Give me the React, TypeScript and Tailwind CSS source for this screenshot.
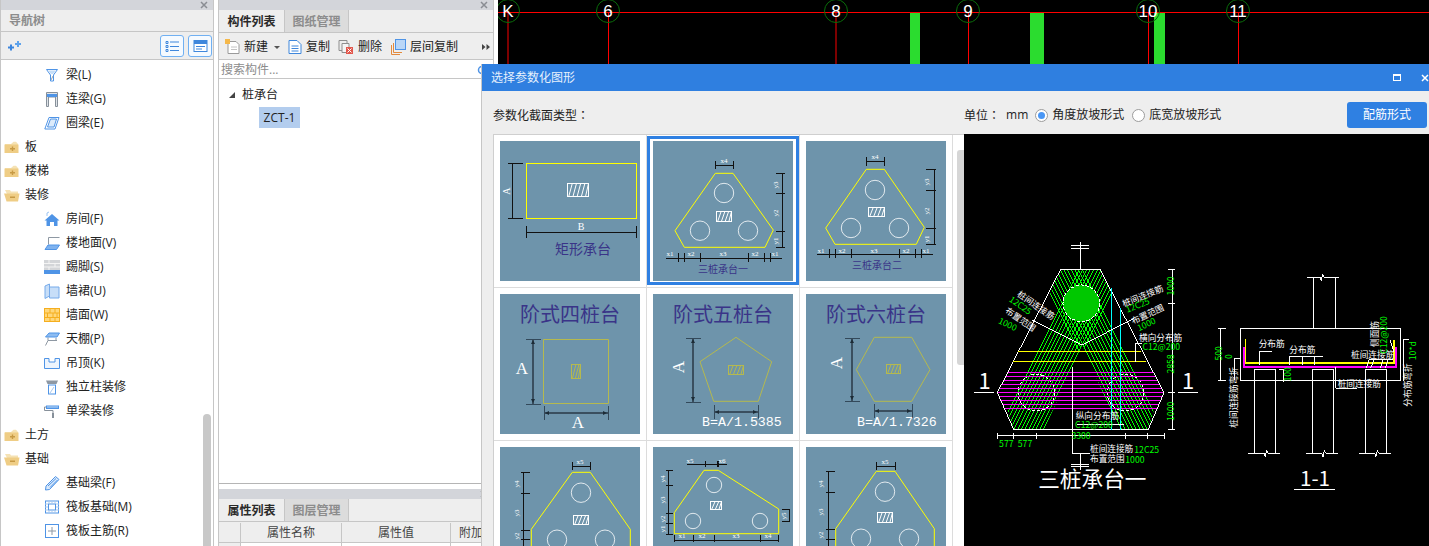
import type { ReactNode } from "react";

const INK = "#111";
const TITLE = "#3a3488";

/* ---------- small drawing helpers ---------- */

const Segs = ({ d, color = INK, w = 1 }: { d: number[][]; color?: string; w?: number }) => (
  <g stroke={color} strokeWidth={w} shapeRendering="crispEdges">
    {d.map((s, i) => (
      <line key={i} x1={s[0]} y1={s[1]} x2={s[2]} y2={s[3]} />
    ))}
  </g>
);

const Hatch = ({ x, y, w, h, color = "#fff" }: { x: number; y: number; w: number; h: number; color?: string }) => {
  const n = Math.max(3, Math.round(w / 4));
  return (
    <g stroke={color} fill="none">
      <rect x={x} y={y} width={w} height={h} />
      {Array.from({ length: n }).map((_, i) => {
        const x0 = x + ((i + 0.3) * w) / n;
        return <line key={i} x1={x0} y1={y + h} x2={Math.min(x0 + 3.5, x + w)} y2={y} />;
      })}
    </g>
  );
};

const Lbl = ({ x, y, t, r, size = 7 }: { x: number; y: number; t: string; r?: boolean; size?: number }) => (
  <text
    x={x}
    y={y}
    fontSize={size}
    fill="#fff"
    textAnchor="middle"
    fontFamily="'Liberation Serif',serif"
    transform={r ? `rotate(-90 ${x} ${y})` : undefined}
  >
    {t}
  </text>
);

const Tile = ({ children }: { children: ReactNode }) => (
  <svg viewBox="0 0 140 140" className="block h-[140px] w-[140px] bg-[#6e94ab]">
    {children}
  </svg>
);

type Pile = {
  pts: string;
  circles: number[][];
  hatch: number[];
  dims: number[][];
  labels: { x: number; y: number; t: string; r?: boolean }[];
  caption?: { x: number; y: number; t: string };
};

const PileTile = ({ pts, circles, hatch, dims, labels, caption }: Pile) => (
  <Tile>
    <polygon points={pts} fill="none" stroke="#ffff00" strokeWidth={1} />
    {circles.map((c, i) => (
      <circle key={i} cx={c[0]} cy={c[1]} r={c[2]} fill="none" stroke="#fff" strokeWidth={0.8} />
    ))}
    <Hatch x={hatch[0]} y={hatch[1]} w={hatch[2]} h={hatch[3]} />
    <Segs d={dims} />
    {labels.map((l, i) => (
      <Lbl key={i} {...l} />
    ))}
    {caption && (
      <text x={caption.x} y={caption.y} fontSize={10} fill={TITLE} textAnchor="middle">
        {caption.t}
      </text>
    )}
  </Tile>
);

const Arrow = ({ x, y, dir }: { x: number; y: number; dir: "u" | "d" | "l" | "r" }) => {
  const p = {
    u: `${x},${y} ${x - 2},${y + 4} ${x + 2},${y + 4}`,
    d: `${x},${y} ${x - 2},${y - 4} ${x + 2},${y - 4}`,
    l: `${x},${y} ${x + 4},${y - 2} ${x + 4},${y + 2}`,
    r: `${x},${y} ${x - 4},${y - 2} ${x - 4},${y + 2}`,
  }[dir];
  return <polygon points={p} fill="#1c2b36" />;
};

const StepTile = ({
  title,
  shape,
  hatch,
  dimX,
  dimY,
  v,
  h,
  letter,
  formula,
}: {
  title: string;
  shape: string;
  hatch: number[];
  dimX: number;
  dimY: number;
  v: number[];
  h: number[];
  letter: number[];
  formula?: { x: number; t: string };
}) => (
  <Tile>
    <text x={70} y={28} fontSize={20} fill={TITLE} textAnchor="middle">
      {title}
    </text>
    <polygon points={shape} fill="none" stroke="#b5b94e" />
    <Hatch x={hatch[0]} y={hatch[1]} w={hatch[2]} h={hatch[3]} color="#b5b94e" />
    <Segs
      color="#3a4f5f"
      w={2}
      d={[
        [dimX, v[0], dimX, v[1]],
        [h[0], dimY, h[1], dimY],
      ]}
    />
    <Segs
      color="#33495a"
      d={[
        [dimX - 7, v[0], dimX + 8, v[0]],
        [dimX - 7, v[1], dimX + 8, v[1]],
        [h[0], dimY - 7, h[0], dimY + 7],
        [h[1], dimY - 7, h[1], dimY + 7],
      ]}
    />
    <Arrow x={dimX} y={v[0] + 1} dir="u" />
    <Arrow x={dimX} y={v[1] - 1} dir="d" />
    <Arrow x={h[0] + 1} y={dimY} dir="l" />
    <Arrow x={h[1] - 1} y={dimY} dir="r" />
    <text
      x={letter[0]}
      y={letter[1]}
      fontSize={17}
      fill="#fff"
      textAnchor="middle"
      fontFamily="'Liberation Serif',serif"
      transform={letter[2] ? `rotate(-90 ${letter[0]} ${letter[1]})` : undefined}
    >
      A
    </text>
    {letter[3] !== undefined && (
      <text x={letter[3]} y={134} fontSize={17} fill="#fff" textAnchor="middle" fontFamily="'Liberation Serif',serif">
        A
      </text>
    )}
    {formula && (
      <text x={formula.x} y={132} fontSize={13.3} fill="#fff" fontFamily="'Liberation Mono',monospace">
        {formula.t}
      </text>
    )}
  </Tile>
);

const ticksV = (x0: number, x1: number, ys: number[]) => ys.map((y) => [x0, y, x1, y]);
const ticksH = (y0: number, y1: number, xs: number[]) => xs.map((x) => [x, y0, x, y1]);

const tiles: ReactNode[] = [
  <Tile key="rect">
    <rect x={26.5} y={22.5} width={110} height={55} fill="none" stroke="#ffff00" />
    <Hatch x={67.5} y={42.5} w={21} h={13} />
    <Segs
      d={[
        [12, 22, 12, 78],
        [8, 22, 23, 22],
        [8, 77, 23, 77],
        [26, 91, 137, 91],
        [26, 85, 26, 97],
        [136, 85, 136, 97],
      ]}
    />
    <Lbl x={10} y={50} t="A" r size={10} />
    <Lbl x={81} y={89} t="B" size={10} />
    <text x={83} y={113} fontSize={14} fill={TITLE} textAnchor="middle">
      矩形承台
    </text>
  </Tile>,
  <PileTile
    key="p1"
    pts="62.3,32.3 80,32.3 120.3,89 112,106.3 31.3,106.3 22,89.7"
    circles={[
      [71, 52, 9.7],
      [47, 89.7, 9.7],
      [95, 89.7, 9.7],
    ]}
    hatch={[63.5, 70.5, 15, 10]}
    dims={[
      [62, 24, 80, 24],
      [62, 20, 62, 28],
      [80, 20, 80, 28],
      [129, 32, 129, 106],
      ...ticksV(123, 132, [32, 52, 90, 106]),
      [13, 117, 129, 117],
      ...ticksH(112, 121, [25, 31, 47, 95, 111, 117]),
    ]}
    labels={[
      { x: 71, y: 22, t: "x4" },
      { x: 125, y: 44, t: "y3", r: true },
      { x: 125, y: 72, t: "y2", r: true },
      { x: 125, y: 100, t: "y1", r: true },
      { x: 17, y: 115, t: "x1" },
      { x: 38, y: 115, t: "x2" },
      { x: 70, y: 115, t: "x3" },
      { x: 102, y: 115, t: "x2" },
      { x: 122, y: 115, t: "x1" },
    ]}
    caption={{ x: 70, y: 132, t: "三桩承台一" }}
  />,
  <PileTile
    key="p2"
    pts="60.3,28.3 78.3,28.3 118.3,86.3 110.3,103.3 29,103.3 19.7,87"
    circles={[
      [69, 49, 9.7],
      [45, 87, 9.7],
      [93, 87, 9.7],
    ]}
    hatch={[62.5, 66.5, 16, 9]}
    dims={[
      [60, 20, 78, 20],
      [60, 16, 60, 25],
      [78, 16, 78, 25],
      [128, 28, 128, 103],
      ...ticksV(120, 130, [28, 49, 87, 103]),
      [11, 113, 127, 113],
      ...ticksH(108, 117, [23, 29, 45, 93, 109, 115]),
    ]}
    labels={[
      { x: 69, y: 18, t: "x4" },
      { x: 123, y: 41, t: "y3", r: true },
      { x: 123, y: 70, t: "y2", r: true },
      { x: 123, y: 98, t: "y1", r: true },
      { x: 15, y: 112, t: "x1" },
      { x: 36, y: 112, t: "x2" },
      { x: 68, y: 112, t: "x3" },
      { x: 100, y: 112, t: "x2" },
      { x: 120, y: 112, t: "x1" },
    ]}
    caption={{ x: 71, y: 128, t: "三桩承台二" }}
  />,
  <StepTile
    key="s4"
    title="阶式四桩台"
    shape="43.5,45.5 108.5,45.5 108.5,109.5 43.5,109.5"
    hatch={[71.5, 70.5, 9, 14]}
    dimX={33}
    dimY={119}
    v={[45, 110]}
    h={[44, 108]}
    letter={[22, 80, 0, 78]}
  />,
  <StepTile
    key="s5"
    title="阶式五桩台"
    shape="83,43.3 118.7,67.7 105.3,107.3 60.7,107.3 47,67.7"
    hatch={[75.5, 71.5, 15, 9]}
    dimX={40}
    dimY={118}
    v={[44, 108]}
    h={[61, 105]}
    letter={[31, 73, 1]}
    formula={{ x: 49, t: "B=A/1.5385" }}
  />,
  <StepTile
    key="s6"
    title="阶式六桩台"
    shape="68.3,43.3 105.7,43.3 124,75.7 105.7,107.3 68.3,107.3 50.3,75.7"
    hatch={[80.5, 70.5, 14, 9]}
    dimX={46}
    dimY={117}
    v={[44, 107]}
    h={[68, 106]}
    letter={[36, 69, 1]}
    formula={{ x: 51, t: "B=A/1.7326" }}
  />,
  <PileTile
    key="p3"
    pts="72.3,25.3 90.3,25.3 130.3,82.3 130.3,125 31.3,125 31.3,82.3"
    circles={[
      [81, 45.7, 9.7],
      [57, 92.7, 9.7],
      [105, 92.7, 9.7],
    ]}
    hatch={[73.5, 68.5, 15, 9]}
    dims={[
      [72, 19, 90, 19],
      [72, 15, 72, 23],
      [90, 15, 90, 23],
      [23, 25, 23, 100],
      ...ticksV(21, 30, [25, 46, 83, 92]),
    ]}
    labels={[
      { x: 80, y: 17, t: "x5" },
      { x: 19, y: 37, t: "y4", r: true },
      { x: 19, y: 66, t: "y3", r: true },
      { x: 19, y: 89, t: "y2", r: true },
    ]}
  />,
  <PileTile
    key="p4"
    pts="51,23.3 65.3,23.3 125.7,62 125.7,86.7 21.3,86.7 21.3,65.7"
    circles={[
      [61, 38, 7.7],
      [40, 74, 7.7],
      [107, 74, 7.7],
    ]}
    hatch={[57.5, 54.5, 11, 8]}
    dims={[
      [34, 17, 64, 17],
      [65, 17, 74, 17],
      [52, 14, 52, 20],
      [64, 14, 64, 20],
      [65, 14, 65, 20],
      [15, 23, 15, 87],
      ...ticksV(13, 20, [23, 38, 66, 76, 87]),
      [136, 62, 136, 74],
      [129, 62, 137, 62],
      [129, 74, 137, 74],
      [21, 93, 126, 93],
      ...ticksH(88, 95, [21, 40, 61, 107, 125]),
    ]}
    labels={[
      { x: 37, y: 16, t: "x5" },
      { x: 69, y: 16, t: "x6" },
      { x: 12, y: 32, t: "y4", r: true },
      { x: 12, y: 53, t: "y3", r: true },
      { x: 12, y: 72, t: "y2", r: true },
      { x: 12, y: 82, t: "y1", r: true },
      { x: 133, y: 69, t: "y5", r: true },
      { x: 29, y: 91, t: "x1" },
      { x: 49, y: 91, t: "x2" },
      { x: 83, y: 91, t: "x3" },
      { x: 115, y: 91, t: "x4" },
    ]}
  />,
  <PileTile
    key="p5"
    pts="70.3,24.3 89,24.3 128.3,81.7 128.3,125 29.7,125 29.7,81.7"
    circles={[
      [79, 44.7, 9.7],
      [55, 91.7, 9.7],
      [103, 91.7, 9.7],
    ]}
    hatch={[71.5, 65.5, 15, 10]}
    dims={[
      [70, 19, 89, 19],
      [70, 15, 70, 23],
      [89, 15, 89, 23],
      [22, 24, 22, 100],
      ...ticksV(20, 29, [24, 45, 82, 92]),
    ]}
    labels={[
      { x: 79, y: 17, t: "x5" },
      { x: 17, y: 37, t: "y4", r: true },
      { x: 17, y: 65, t: "y3", r: true },
      { x: 17, y: 88, t: "y2", r: true },
    ]}
  />,
];

/* ---------- CAD preview ---------- */

const CadText = ({
  x,
  y,
  t,
  c = "#fff",
  rot,
  size = 26,
  anchor = "middle",
}: {
  x: number;
  y: number;
  t: string;
  c?: string;
  rot?: number;
  size?: number;
  anchor?: "middle" | "start";
}) => (
  <text
    x={x}
    y={y}
    fill={c}
    fontSize={size}
    textAnchor={anchor}
    dominantBaseline="middle"
    transform={rot ? `rotate(${rot} ${x} ${y})` : undefined}
  >
    {t}
  </text>
);

const G = "#00ff00";

const range = (from: number, to: number, step: number) => {
  const out: number[] = [];
  for (let v = from; v <= to; v += step) out.push(v);
  return out;
};

const PlanDrawing = () => (
  <g transform="translate(964 230) scale(0.3333)" shapeRendering="crispEdges">
    <defs>
      <clipPath id="arms">
        <polygon points="290,118 408,118 430,160 570,540 552,600 465,600 355,345 240,600 150,600 130,540 270,160" />
      </clipPath>
      <clipPath id="cap">
        <polygon points="290,118 408,118 600,488 552,600 150,600 100,488" />
      </clipPath>
    </defs>
    <g clipPath="url(#arms)" stroke={G} strokeWidth={3}>
      {range(105, 240, 11).map((b) => (
        <line key={b} x1={b} y1={600} x2={b + 250} y2={100} />
      ))}
      {range(105, 240, 11).map((b) => (
        <line key={b} x1={700 - b} y1={600} x2={450 - b} y2={100} />
      ))}
    </g>
    <circle cx={352} cy={220} r={55} fill="#00c800" stroke="#fff" strokeWidth={3} strokeDasharray="10 5" />
    <circle cx={217} cy={488} r={55} fill="none" stroke="#fff" strokeWidth={3} strokeDasharray="10 5" />
    <circle cx={485} cy={488} r={55} fill="none" stroke="#fff" strokeWidth={3} strokeDasharray="10 5" />
    <g clipPath="url(#cap)" stroke="#ff00ff" strokeWidth={3}>
      {range(429, 545, 12).map((y) => (
        <line key={y} x1={90} y1={y} x2={610} y2={y} />
      ))}
    </g>
    <polygon points="290,118 408,118 600,488 552,600 150,600 100,488" fill="none" stroke="#fff" strokeWidth={3} />
    <Segs
      w={3}
      color="#ffff00"
      d={[
        [163, 364, 530, 364],
        [148, 394, 545, 394],
      ]}
    />
    <Segs
      w={3}
      color="#00ffff"
      d={[
        [442, 175, 442, 600],
        [469, 235, 469, 600],
      ]}
    />
    <polyline points="205,270 355,345 510,265" fill="none" stroke="#fff" strokeWidth={3} />
    <Segs
      w={3}
      color="#fff"
      d={[
        [349, 35, 349, 118],
        [322, 47, 375, 47],
        [322, 55, 375, 55],
        [349, 672, 349, 720],
        [322, 703, 375, 703],
        [322, 710, 375, 710],
        [326, 410, 326, 672],
        [326, 672, 378, 672],
        [30, 487, 90, 487],
        [642, 487, 702, 487],
        [625, 118, 625, 600],
        [612, 118, 632, 118],
        [612, 222, 632, 222],
        [612, 488, 632, 488],
        [612, 600, 632, 600],
        [100, 618, 602, 618],
        ...ticksH(608, 628, [100, 150, 217, 325, 485, 552, 602]),
        [514, 340, 514, 396],
        [514, 340, 535, 340],
        [340, 585, 480, 585],
      ]}
    />
    <CadText x={215} y={228} t="桩间连接筋" rot={35} />
    <CadText x={168} y={228} t="12C25" c={G} rot={35} />
    <CadText x={168} y={270} t="布置范围" rot={35} />
    <CadText x={130} y={285} t="1000" c={G} rot={25} />
    <CadText x={537} y={200} t="桩间连接筋" rot={-22} />
    <CadText x={522} y={228} t="12C25" c={G} rot={-22} />
    <CadText x={552} y={255} t="布置范围" rot={-25} />
    <CadText x={548} y={285} t="1000" c={G} rot={-25} />
    <CadText x={590} y={325} t="横向分布筋" />
    <CadText x={592} y={354} t="C12@200" c={G} />
    <CadText x={623} y={168} t="1000" c={G} rot={-90} />
    <CadText x={623} y={402} t="2858" c={G} rot={-90} />
    <CadText x={623} y={544} t="1000" c={G} rot={-90} />
    <CadText x={351} y={621} t="3300" c={G} />
    <CadText x={127} y={643} t="577" c={G} />
    <CadText x={183} y={643} t="577" c={G} />
    <CadText x={400} y={559} t="纵向分布筋" />
    <CadText x={390} y={588} t="C12@200" c={G} />
    <CadText x={378} y={660} t="桩间连接筋" anchor="start" />
    <CadText x={511} y={661} t="12C25" c={G} anchor="start" />
    <CadText x={378} y={690} t="布置范围" anchor="start" />
    <CadText x={484} y={691} t="1000" c={G} anchor="start" />
    <CadText x={62} y={460} t="1" size={66} />
    <CadText x={672} y={460} t="1" size={66} />
    <CadText x={385} y={752} t="三桩承台一" size={65} />
  </g>
);

const SectionDrawing = () => (
  <g transform="translate(1200 260) scale(0.3333)" shapeRendering="crispEdges">
    <polyline points="132,262 132,320 588,320 588,262" fill="none" stroke="#ff00ff" strokeWidth={6} />
    <polyline points="137,238 137,310 582,310 582,240" fill="none" stroke="#ffff00" strokeWidth={5} />
    <rect x={121} y={205} width={481} height={157} fill="none" stroke="#fff" strokeWidth={3} />
    <g fill="none" stroke="#fff" strokeWidth={3}>
      <path d="M340 205V50M406 205V50M322 52H360L364 62L368 42L372 52H418" />
      <path d="M163 580V328H227V580M145 580H192L196 590L200 570L204 580H240" />
      <path d="M337 580V328H401V580M318 580H365L369 590L373 570L377 580H414" />
      <path d="M496 580V328H560V580M477 580H524L528 590L532 570L536 580H573" />
      <path d="M62 205V362M55 205H78M55 362H78" />
      <path d="M178 315V274H215M268 315V290H368M307 315V290M345 315V290" />
      <path d="M238 328H252V365M408 320V385H470M610 240V362M610 240H628" />
      <path d="M498 325L508 298M512 325L522 298M540 325L550 298M555 325L565 298M508 298H580" />
      <path d="M105 295H120M105 295V360" />
      <path d="M570 240L582 275" />
      <path d="M282 688H405" />
    </g>
    <CadText x={215} y={255} t="分布筋" />
    <CadText x={307} y={273} t="分布筋" />
    <CadText x={518} y={288} t="桩间连接筋" />
    <CadText x={478} y={375} t="桩间连接筋" />
    <CadText x={528} y={222} t="侧面筋" rot={-90} />
    <CadText x={555} y={225} t="C12@200" c={G} rot={-90} />
    <CadText x={60} y={280} t="500" c={G} rot={-90} />
    <CadText x={90} y={290} t="0" c={G} rot={-90} />
    <CadText x={265} y={343} t="100" c={G} rot={-90} />
    <CadText x={640} y={272} t="10*d" c={G} rot={-90} />
    <CadText x={105} y={412} t="桩间连接筋弯折" rot={-90} />
    <CadText x={625} y={375} t="分布筋弯折" rot={-90} />
    <CadText x={345} y={660} t="1-1" size={62} />
  </g>
);

/* ---------- tree icons ---------- */

const Ico = ({ children }: { children: ReactNode }) => (
  <svg viewBox="0 0 16 16" className="h-4 w-4 shrink-0" fill="none" strokeWidth={1}>
    {children}
  </svg>
);

const BL = "#4f94e6";

const icons: Record<string, ReactNode> = {
  beam: (
    <Ico>
      <path d="M2.5 2.5h11L9.5 8v6h-3V8z" stroke={BL} />
      <path d="M4 3.5h8L9 7H7z" fill="#c5def8" />
      <path d="M7 13L9 9" stroke="#9aa3ad" />
    </Ico>
  ),
  link: (
    <Ico>
      <path d="M2.5 1.5h11v14h-2V6h-7v9.500h-2z" stroke="#87909a" fill="#dfe3e8" />
      <rect x={3} y={3} width={10} height={3} fill={BL} />
    </Ico>
  ),
  ring: (
    <Ico>
      <path d="M5 2.500h10L11 14H.8z" stroke={BL} />
      <path d="M6.500 4h6L10 12H3.500z" stroke={BL} fill="#dcebfb" />
    </Ico>
  ),
  room: (
    <Ico>
      <path d="M8 3L15.500 9.500H13.500V15H10V11H6V15H2.500V9.500H.5z" fill={BL} />
      <path d="M3 5V2L5 1" stroke="#9cc4f2" />
    </Ico>
  ),
  floor: (
    <Ico>
      <path d="M4.500 9.500V2.500H15.500" stroke="#8e98a3" />
      <path d="M4 10H15.500L12.500 14.500H1z" fill="#7fb2ee" stroke={BL} />
    </Ico>
  ),
  skirt: (
    <Ico>
      <rect x={0} y={1} width={16} height={10} fill="#d3d5d8" />
      <path d="M0 4.500h16M0 8h16M5 1v3.500M11 4.500V8M5 8v3" stroke="#f4f4f4" />
      <rect x={0} y={11} width={16} height={4} fill={BL} />
    </Ico>
  ),
  dado: (
    <Ico>
      <path d="M1 3L5.500 1V13L1 15.500zM5.500 4H15V15H5.500z" fill="#c7def8" stroke="#77abea" />
    </Ico>
  ),
  wall: (
    <Ico>
      <rect x={.5} y={1.500} width={15} height={13} fill="#ffd77a" stroke="#f5ae1e" />
      <path d="M1 6h14M1 10.500h14M6 2v4M11 2v4M3.500 6v4.500M9 6v4.500M13 6v4.500M6 10.500v4M11 10.500v4" stroke="#f5ae1e" />
    </Ico>
  ),
  ceiling: (
    <Ico>
      <path d="M5 2H15.500L13 6H1.500z" fill="#8dbcf1" stroke={BL} />
      <path d="M4 6.500V9.500H13M4 9.500L1.500 14.500M12 7V9.500" stroke="#8e98a3" />
    </Ico>
  ),
  hung: (
    <Ico>
      <path d="M.5 3.500h4.500v3.500h6V3.500h4.500v10h-15z" stroke={BL} fill="#eef5fd" />
    </Ico>
  ),
  post: (
    <Ico>
      <path d="M2 1.500h12L12.500 5h-9z" fill="#8e98a3" />
      <rect x={4.500} y={6} width={7} height={9} stroke={BL} />
      <path d="M6 14L10 8" stroke="#a9c9ef" />
    </Ico>
  ),
  roller: (
    <Ico>
      <path d="M2 2.500h13v3.500H2z" fill={BL} />
      <path d="M2 4H.5v3.500H9V10" stroke="#87909a" />
      <rect x={8} y={10} width={2} height={5} fill="#87909a" />
      <rect x={3} y={3.500} width={11} height={1} fill="#c5def8" />
    </Ico>
  ),
  pencil: (
    <Ico>
      <path d="M11.500 1.500L15 4.500 5.500 14.500 1.500 15 2 11z" stroke={BL} fill="#d9e9fb" />
      <path d="M4 11L12 3.500M6 12.500L13.500 5" stroke={BL} />
    </Ico>
  ),
  raft: (
    <Ico>
      <rect x={1.500} y={2} width={13} height={12} stroke={BL} />
      <rect x={4.500} y={5} width={7} height={6} stroke={BL} />
      <path d="M1 5h3M1 8h3M1 11h3M12 5h3M12 8h3M12 11h3M5 2v3M8 2v3M11 2v3M5 11v3M8 11v3M11 11v3" stroke="#a9c9ef" />
    </Ico>
  ),
  rebar: (
    <Ico>
      <rect x={1.500} y={1.500} width={13} height={13} stroke={BL} />
      <path d="M8 4v8M4 8h8" stroke="#8e98a3" />
    </Ico>
  ),
};

const Folder = ({ open }: { open?: boolean }) =>
  open ? (
    <svg viewBox="0 0 16 13" className="h-[13px] w-4 shrink-0">
      <path d="M1 1h5l1 1.500h7V5H3z" fill="#f5e2b4" />
      <path d="M0 4.500h15.500L14 12.500H2.500z" fill="#efcd85" />
      <rect x={6} y={7.500} width={5} height={1.500} fill="#c79a45" />
    </svg>
  ) : (
    <svg viewBox="0 0 16 13" className="h-[13px] w-4 shrink-0">
      <path d="M1 3L7 3L9.500 .8L12 .8L14 3v1H1z" fill="#f5e2b4" />
      <rect x={.500} y={3.500} width={14} height={8.500} fill="#efcd85" />
      <path d="M6 7.700h5M8.500 5.500v4.500" stroke="#c79a45" strokeWidth={1.400} />
    </svg>
  );

const tree: { label: string; icon?: string; folder?: "open" | "closed" }[] = [
  { label: "梁(L)", icon: "beam" },
  { label: "连梁(G)", icon: "link" },
  { label: "圈梁(E)", icon: "ring" },
  { label: "板", folder: "closed" },
  { label: "楼梯", folder: "closed" },
  { label: "装修", folder: "open" },
  { label: "房间(F)", icon: "room" },
  { label: "楼地面(V)", icon: "floor" },
  { label: "踢脚(S)", icon: "skirt" },
  { label: "墙裙(U)", icon: "dado" },
  { label: "墙面(W)", icon: "wall" },
  { label: "天棚(P)", icon: "ceiling" },
  { label: "吊顶(K)", icon: "hung" },
  { label: "独立柱装修", icon: "post" },
  { label: "单梁装修", icon: "roller" },
  { label: "土方", folder: "closed" },
  { label: "基础", folder: "open" },
  { label: "基础梁(F)", icon: "pencil" },
  { label: "筏板基础(M)", icon: "raft" },
  { label: "筏板主筋(R)", icon: "rebar" },
];

/* ---------- panel bits ---------- */

const CloseX = ({ color = "#8a8d93" }: { color?: string }) => (
  <svg viewBox="0 0 8 8" className="h-2 w-2">
    <path d="M1 1l6 6M7 1l-6 6" stroke={color} strokeWidth={1.500} />
  </svg>
);

const TitleStrip = () => (
  <div className="flex h-[10px] shrink-0 items-center justify-end bg-[#d3d5da] pr-[5px]">
    <CloseX />
  </div>
);

const Tabs = ({ first, second }: { first: string; second: string }) => (
  <div className="flex h-[23px] shrink-0 border-b border-[#c6c6c6] bg-[#eeeeee] text-xs font-bold">
    <div className="flex w-[65px] items-center justify-center pt-[2px] text-[#2a2a2a]">{first}</div>
    <div className="flex w-[65px] items-center justify-center border-x border-[#c6c6c6] bg-[#dcdcdc] pt-[2px] text-[#8c8c8c]">
      {second}
    </div>
  </div>
);

const Radio = ({ on }: { on?: boolean }) => (
  <span className="flex h-[13px] w-[13px] items-center justify-center rounded-full border border-[#9c9c9c] bg-white">
    {on && <span className="h-[7px] w-[7px] rounded-full bg-[#4a97f5]" />}
  </span>
);

const App = () => {
  return (
    <div className="relative flex h-[546px] w-[1429px] overflow-hidden bg-white font-['Open_Sans','Noto_Sans_CJK_SC',sans-serif] text-xs text-[#222]">
      {/* Navigation tree */}
      <div className="flex h-full w-[214px] shrink-0 flex-col border-x border-[#c6c6c6]">
        <TitleStrip />
        <div className="flex h-[22px] shrink-0 items-center border-b border-[#c6c6c6] bg-[#eeeeee] pl-2 font-bold text-[#8c8c8c]">
          导航树
        </div>
        <div className="flex h-[28px] shrink-0 items-center border-b border-[#c6c6c6] bg-[#eeeeee] pl-[7px] pr-px">
          <svg viewBox="0 0 14 10" className="h-[10px] w-[14px]">
            <path d="M0 6.500h6M3 3.500v6" stroke="#3d86dd" strokeWidth={2} />
            <path d="M7 3h6M10 0v6" stroke="#5fa3ec" strokeWidth={2} />
          </svg>
          <button className="ml-auto flex h-[22px] w-6 items-center justify-center rounded-[3px] border border-[#70b0f2] bg-[#f5faff]">
            <svg viewBox="0 0 14 12" className="h-3 w-[14px]" fill="none" stroke="#3f87dc">
              <path d="M1 1.500h2v2H1zM1 5.500h2v2H1zM1 9.500h2v2H1zM5 2h9M5 6.500h9M5 10.500h9" />
            </svg>
          </button>
          <button className="ml-1 flex h-[22px] w-6 items-center justify-center rounded-[3px] border border-[#70b0f2] bg-[#f5faff]">
            <svg viewBox="0 0 14 12" className="h-3 w-[15px]">
              <rect x={.5} y={.5} width={13} height={11} fill="#fff" stroke="#3f87dc" />
              <rect x={.5} y={.5} width={13} height={3.500} fill="#3f87dc" />
              <path d="M2.500 6.500h9M2.500 9h6" stroke="#3f87dc" />
            </svg>
          </button>
        </div>
        <div className="flex min-h-0 flex-1 overflow-hidden bg-white">
          <ul className="flex-1 pt-[3px]">
            {tree.map((n) =>
              n.folder ? (
                <li key={n.label} className="flex h-6 items-center gap-[5px] pl-[3px]">
                  <Folder open={n.folder === "open"} />
                  {n.label}
                </li>
              ) : (
                <li key={n.label} className="flex h-6 items-center gap-[6px] pl-[43px]">
                  {icons[n.icon as string]}
                  {n.label}
                </li>
              ),
            )}
          </ul>
          <div className="mr-[2px] mt-[354px] h-[140px] w-2 shrink-0 rounded-full bg-[#c8c8c8]" />
        </div>
      </div>

      <div className="w-1 shrink-0" />

      {/* Component list + properties */}
      <div className="flex h-full w-[276px] shrink-0 flex-col border-x border-[#c6c6c6]">
        <TitleStrip />
        <Tabs first="构件列表" second="图纸管理" />
        <div className="flex h-[27px] shrink-0 items-center border-b border-[#c6c6c6] bg-[#eeeeee] pl-[6px] pt-[2px]">
          <svg viewBox="0 0 16 16" className="h-4 w-4" fill="none">
            <path d="M3 2.500h8l3 3v9H3z" fill="#fff" stroke="#9a9a9a" />
            <path d="M6 8h6M6 10.500h6" stroke="#c4c4c4" />
            <rect x={0} y={0} width={5} height={5} fill="#f5b84a" />
          </svg>
          <span className="ml-[3px]">新建</span>
          <span className="ml-[6px] h-0 w-0 border-x-[3px] border-t-[3px] border-x-transparent border-t-[#555]" />
          <svg viewBox="0 0 14 16" className="ml-[8px] h-4 w-[14px]" fill="none" stroke="#3f87dc">
            <path d="M1 1.500h8l4 4v9H1z" fill="#fff" />
            <path d="M3.500 7h7M3.500 9.500h7M3.500 12h7" />
          </svg>
          <span className="ml-[4px]">复制</span>
          <svg viewBox="0 0 16 16" className="ml-[8px] h-4 w-4" fill="none">
            <path d="M1 1.500h8v10H1z" stroke="#8e8e8e" />
            <path d="M4 4.500h7v9H4z" stroke="#8e8e8e" fill="#f4f4f4" />
            <rect x={8} y={8} width={7} height={7} fill="#e2574c" />
            <path d="M9.500 9.500l4 4M13.500 9.500l-4 4" stroke="#fff" />
          </svg>
          <span className="ml-[4px]">删除</span>
          <svg viewBox="0 0 16 16" className="ml-[8px] h-4 w-4" fill="none">
            <path d="M1.500 6v9.500H10" stroke="#e48a3c" />
            <path d="M3.500 4v9.500H12" stroke="#e48a3c" />
            <rect x={5.500} y={.5} width={10} height={10} fill="#b9d6f7" stroke="#4f94e6" />
          </svg>
          <span className="ml-[4px]">层间复制</span>
          <svg viewBox="0 0 8 6" className="ml-auto mr-[3px] h-[6px] w-2" fill="#444">
            <path d="M0 0l3.500 3L0 6zM4.500 0L8 3 4.500 6z" />
          </svg>
        </div>
        <div className="flex h-[19px] shrink-0 items-center border-b border-[#c6c6c6] bg-white pl-[2px] pr-[6px] pt-[2px] text-[#8c8c8c]">
          搜索构件...
          <svg viewBox="0 0 10 10" className="ml-auto h-[10px] w-[10px]" fill="none" stroke="#4f94e6" strokeWidth={1.500}>
            <circle cx={5} cy={5} r={3.500} />
          </svg>
        </div>
        <div className="min-h-0 flex-1 border-b border-[#b5b5b5] bg-white pt-[4px]">
          <div className="flex h-[23px] items-center pl-[10px] pt-px">
            <span className="h-0 w-0 border-b-[6px] border-l-[6px] border-b-[#444] border-l-transparent" />
            <span className="ml-[7px]">桩承台</span>
          </div>
          <div className="ml-[40px] mt-px flex h-[21px] w-[41px] items-center justify-center bg-[#b3cdee]">ZCT-1</div>
        </div>
        <div className="h-[5px] shrink-0 bg-white" />
        <TitleStrip />
        <Tabs first="属性列表" second="图层管理" />
        <div className="flex h-[21px] shrink-0 border-b border-[#c6c6c6] bg-[#eeeeee] pt-px text-[#444]">
          <div className="w-[22px] border-r border-[#c6c6c6]" />
          <div className="flex w-[101px] items-center justify-center border-r border-[#c6c6c6]">属性名称</div>
          <div className="flex w-[109px] items-center justify-center border-r border-[#c6c6c6]">属性值</div>
          <div className="flex items-center pl-[8px]">附加</div>
        </div>
        <div className="flex h-[3px] shrink-0">
          <div className="w-[22px] border-r border-[#c6c6c6] bg-[#eeeeee]" />
          <div className="w-[101px] border-r border-[#c6c6c6]" />
          <div className="w-[109px] border-r border-[#c6c6c6]" />
        </div>
      </div>

      <div className="w-1 shrink-0" />

      {/* Drawing area behind the dialog */}
      <div className="h-full flex-1 bg-black">
        <svg viewBox="498 0 931 64" className="block h-16 w-full">
          <g fill="#2bdc2f">
            <rect x={910} y={13} width={10} height={51} />
            <rect x={1030} y={13} width={14} height={51} />
            <rect x={1154} y={13} width={11} height={51} />
          </g>
          <Segs
            color="#7d0000"
            w={2}
            d={[
              [508, 12, 508, 64],
              [836, 12, 836, 64],
            ]}
          />
          <Segs
            color="#ff0000"
            d={[
              [608, 12, 608, 64],
              [968, 12, 968, 64],
              [1148, 12, 1148, 64],
              [1238, 12, 1238, 64],
              [498, 12, 1429, 12],
            ]}
          />
          {[
            [508, "K"],
            [608, "6"],
            [836, "8"],
            [968, "9"],
            [1148, "10"],
            [1238, "11"],
          ].map(([x, t]) => (
            <g key={t}>
              <circle cx={x as number} cy={11} r={11.5} fill="none" stroke="#0a6e0a" />
              <text
                x={x as number}
                y={17}
                fontSize={17}
                fill="#fff"
                textAnchor="middle"
                fontFamily="'Liberation Sans',sans-serif"
              >
                {t}
              </text>
            </g>
          ))}
        </svg>
      </div>

      {/* Dialog */}
      <div className="absolute bottom-0 left-[481px] right-0 top-[64px] flex flex-col overflow-hidden border-l border-[#c6c6c6] bg-[#eeeeee]">
        <div className="flex h-[27px] shrink-0 items-center bg-[#2f7fe0] pl-[9px] text-[#e6f0fc]">
          选择参数化图形
          <span className="ml-auto mr-[20px] h-[7px] w-[8px] border border-t-2 border-white" />
          <CloseX color="#fff" />
        </div>
        <div className="flex h-[43px] shrink-0 items-center pl-[11px] pr-[2px] pt-[5px]">
          <span>
            参数化截面类型<span className="font-['Noto_Sans_CJK_TC']">：</span>
          </span>
          <span className="ml-[375px]">
            单位<span className="font-['Noto_Sans_CJK_TC']">：</span>
          </span>
          <span className="ml-[6px]">mm</span>
          <span className="ml-[7px]">
            <Radio on />
          </span>
          <span className="ml-[4px]">角度放坡形式</span>
          <span className="ml-[8px]">
            <Radio />
          </span>
          <span className="ml-[4px]">底宽放坡形式</span>
          <button className="ml-auto flex h-[26px] w-20 items-center justify-center rounded-[3px] bg-[#2f80e2] text-white">
            配筋形式
          </button>
        </div>
        <div className="ml-[11px] flex min-h-0 flex-1">
          <div className="flex w-[471px] shrink-0 overflow-hidden border-l border-t border-[#cfcfcf] bg-white">
            <div className="grid w-[459px] shrink-0 grid-cols-[repeat(3,153px)] content-start">
              {tiles.map((tile, i) => (
                <div key={i} className="relative h-[153px] border-b border-r border-[#dcdcdc] p-[6px]">
                  {i === 1 && <span className="absolute inset-x-0 bottom-[2px] top-px border-[3px] border-[#2f80e2]" />}
                  {tile}
                </div>
              ))}
            </div>
            <div className="ml-[4px] mt-[15px] h-[215px] w-[7px] rounded-l-[3px] bg-[#d6d6d6]" />
          </div>
          <div className="min-w-0 flex-1 bg-black">
            <svg viewBox="964 134 465 412" className="block h-full w-full" fontFamily="'Noto Sans CJK SC',sans-serif">
              <PlanDrawing />
              <SectionDrawing />
            </svg>
          </div>
        </div>
      </div>
    </div>
  );
};

export default App;
